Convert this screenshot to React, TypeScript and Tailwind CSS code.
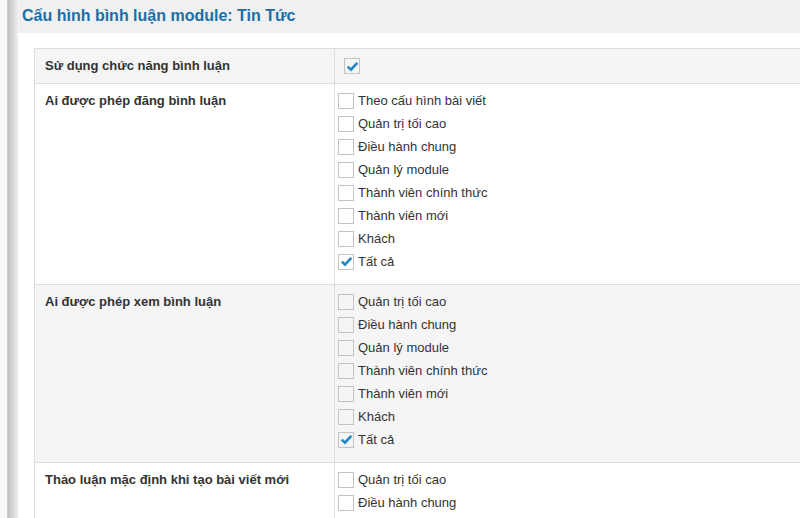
import React from 'react';

const Check = ({ checked }: { checked?: boolean }) => (
  <span className="flex h-[16px] w-[16px] shrink-0 items-center justify-center border border-[#c3c3c3] bg-transparent">
    {checked && (
      <svg width="13" height="13" viewBox="0 0 13 13">
        <path d="M1.8 6.6 L5 9.6 L11.3 2.8" fill="none" stroke="#1f86c8" strokeWidth="2.6" strokeLinejoin="miter" />
      </svg>
    )}
  </span>
);

const OptionList = ({ items }: { items: { label: string; checked?: boolean }[] }) => (
  <div className="flex flex-col pl-[3px] pt-[5px] pb-[11px]">
    {items.map((it) => (
      <label key={it.label} className="flex h-[23px] items-center gap-[4px] text-[13px] text-[#333]">
        <Check checked={it.checked} />
        <span>{it.label}</span>
      </label>
    ))}
  </div>
);

const postGroups = [
  { label: 'Theo cấu hình bài viết' },
  { label: 'Quản trị tối cao' },
  { label: 'Điều hành chung' },
  { label: 'Quản lý module' },
  { label: 'Thành viên chính thức' },
  { label: 'Thành viên mới' },
  { label: 'Khách' },
  { label: 'Tất cả', checked: true },
];

const viewGroups = postGroups.slice(1);

const defaultGroups = [
  { label: 'Quản trị tối cao' },
  { label: 'Điều hành chung' },
  { label: 'Quản lý module' },
];

const Row = ({ label, gray, children }: { label: string; gray?: boolean; children: React.ReactNode }) => (
  <div className={`flex border-t border-[#dddddd] ${gray ? 'bg-[#f5f5f5]' : 'bg-white'}`}>
    <div className="w-[300px] shrink-0 border-r border-[#dddddd] px-[10px] pt-[7px] pb-[6px] text-[13px] font-bold leading-[20px] text-[#333]">
      {label}
    </div>
    <div className="flex-1">{children}</div>
  </div>
);

export default function App() {
  return (
    <div
      className="flex h-[518px] w-[800px] overflow-hidden bg-[#f7f7f7]"
      style={{ fontFamily: '"Liberation Sans", Arial, sans-serif' }}
    >
      <div className="w-[8px] shrink-0 border-r border-[#d0d0d0]" />
      <div className="w-[10px] shrink-0 bg-gradient-to-r from-[#c2c2c2] to-[#eeeeee]" />
      <div className="flex w-[1000px] shrink-0 flex-col">
        <div className="h-[33px] shrink-0 bg-[#f0f0f0] pl-[4px] pt-[5px] text-[16px] font-bold leading-[22px] text-[#1a6fa6]">
          Cấu hình bình luận module: Tin Tức
        </div>
        <div className="flex-1 bg-white pl-[16px] pt-[15px]">
          <div className="border-l border-[#dddddd]">
            <Row label="Sử dụng chức năng bình luận" gray>
              <div className="flex h-[34px] items-center pl-[9px]">
                <Check checked />
              </div>
            </Row>
            <Row label="Ai được phép đăng bình luận">
              <OptionList items={postGroups} />
            </Row>
            <Row label="Ai được phép xem bình luận" gray>
              <OptionList items={viewGroups} />
            </Row>
            <Row label="Thảo luận mặc định khi tạo bài viết mới">
              <OptionList items={defaultGroups} />
            </Row>
          </div>
        </div>
      </div>
    </div>
  );
}
